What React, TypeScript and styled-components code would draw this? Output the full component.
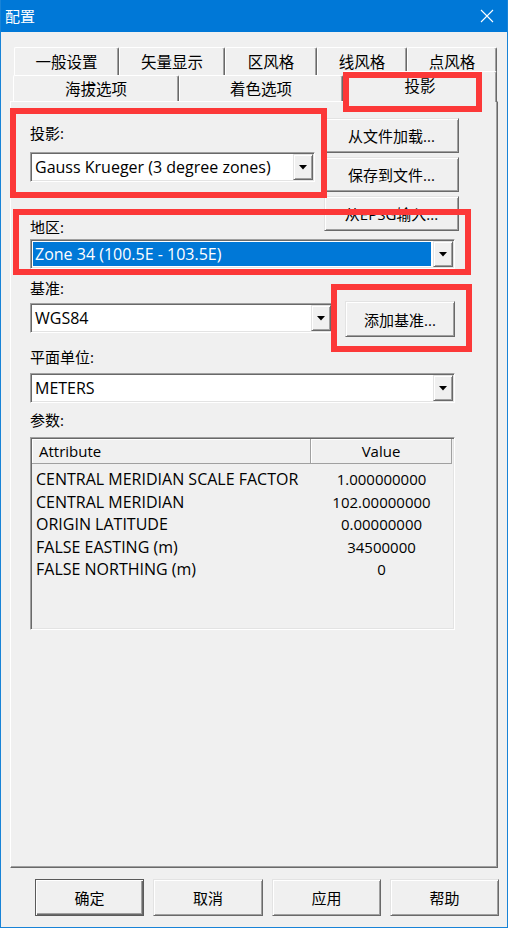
import React from 'react'
import styled, { createGlobalStyle, css } from 'styled-components'

const GlobalStyle = createGlobalStyle`
  * { box-sizing: border-box; }
  html, body { margin: 0; padding: 0; background: #f0f0f0; }
  body {
    font-family: "Open Sans", "Noto Sans CJK SC", sans-serif;
    font-size: 15px;
    color: #000;
  }
`

// classic 3d edges
const raised = css`
  border: 1px solid;
  border-color: #e3e3e3 #696969 #696969 #e3e3e3;
  box-shadow: inset 1px 1px #fff, inset -1px -1px #a0a0a0;
`
const sunken = css`
  border: 1px solid;
  border-color: #a0a0a0 #fff #fff #a0a0a0;
  box-shadow: inset 1px 1px #696969, inset -1px -1px #e3e3e3;
`

const Window = styled.div`
  position: relative;
  width: 508px;
  height: 928px;
  background: #f0f0f0;
  border: 1px solid #1883d7;
  border-top: none;
  display: flex;
  flex-direction: column;
  overflow: hidden;
`

const TitleBar = styled.div`
  height: 32px;
  flex: none;
  background: #0078d7;
  color: #fff;
  display: flex;
  align-items: center;
  justify-content: space-between;
  padding: 0 13px 0 4px;
`

const Title = styled.span`
  font-size: 15px;
  line-height: 20px;
`

const Body = styled.div`
  flex: 1;
  padding: 15px 9px 0;
`

const TabRow = styled.div<{ $height: number; $indent: number }>`
  display: flex;
  align-items: flex-end;
  height: ${p => p.$height}px;
  padding-left: ${p => p.$indent}px;
`

const Tab = styled.div<{ $width: number; $selected?: boolean }>`
  flex: none;
  width: ${p => p.$width}px;
  height: ${p => (p.$selected ? '31px' : '100%')};
  background: #f0f0f0;
  border-top: 1px solid #fff;
  border-left: 1px solid #fff;
  border-right: 1px solid #696969;
  box-shadow: inset -1px 0 #a0a0a0;
  border-radius: 2px 2px 0 0;
  display: flex;
  align-items: center;
  justify-content: center;
  font-size: 15.5px;
  line-height: 20px;
  padding-bottom: ${p => (p.$selected ? 3 : 0)}px;
  position: relative;
  z-index: ${p => (p.$selected ? 2 : 1)};
  margin-bottom: ${p => (p.$selected ? -1 : 0)}px;
`

const Panel = styled.div`
  height: 767px;
  border: 1px solid;
  border-color: #fff #696969 #696969 #fff;
  box-shadow: inset -1px -1px #a0a0a0;
  padding: 16px 0 0 19px;
`

const Row = styled.div`
  display: flex;
  align-items: flex-start;
`

const Column = styled.div<{ $width?: number; $gap?: number; $offset?: number }>`
  display: flex;
  flex-direction: column;
  gap: ${p => p.$gap ?? 0}px;
  width: ${p => (p.$width ? `${p.$width}px` : 'auto')};
  margin-left: ${p => p.$offset ?? 0}px;
`

const Label = styled.div<{ $top: number }>`
  height: 20px;
  line-height: 20px;
  margin-top: ${p => p.$top}px;
  font-size: 15px;
`

const Combo = styled.div<{ $width: number; $top?: number }>`
  ${sunken}
  width: ${p => p.$width}px;
  height: 30px;
  margin-top: ${p => p.$top ?? 0}px;
  background: #fff;
  padding: 1px;
  display: flex;
  flex: none;
`

const ComboText = styled.div<{ $selected?: boolean }>`
  flex: 1;
  display: flex;
  align-items: center;
  margin: 1px 2px 1px 1px;
  padding-left: 2px;
  font-size: 16px;
  white-space: nowrap;
  overflow: hidden;
  background: ${p => (p.$selected ? '#0078d7' : 'transparent')};
  color: ${p => (p.$selected ? '#fff' : '#000')};
`

const DropButton = styled.div`
  ${raised}
  width: 20px;
  flex: none;
  background: #f0f0f0;
  display: flex;
  align-items: center;
  justify-content: center;
`

const Button = styled.div<{ $width: number; $height: number; $top?: number; $default?: boolean }>`
  ${raised}
  width: ${p => p.$width}px;
  height: ${p => p.$height}px;
  margin-top: ${p => p.$top ?? 0}px;
  flex: none;
  background: #f0f0f0;
  display: flex;
  align-items: center;
  justify-content: center;
  font-size: 15px;
  white-space: nowrap;
  ${p =>
    p.$default &&
    css`
      border: 1px solid #5a5a5a;
      box-shadow: inset 1px 1px #fff, inset -1px -1px #696969, inset -2px -2px #a0a0a0;
    `}
`

const List = styled.div`
  ${sunken}
  width: 425px;
  height: 193px;
  margin-top: 7px;
  background: #f0f0f0;
  padding: 1px;
`

const ListHeader = styled.div`
  display: flex;
  height: 25px;
`

const HeaderCell = styled.div<{ $width: number; $center?: boolean }>`
  width: ${p => p.$width}px;
  flex: none;
  border-right: 1px solid #a0a0a0;
  border-bottom: 1px solid #a0a0a0;
  box-shadow: inset 1px 1px #fff;
  display: flex;
  align-items: center;
  justify-content: ${p => (p.$center ? 'center' : 'flex-start')};
  padding-left: ${p => (p.$center ? 0 : 7)}px;
  font-size: 15px;
`

const ListBody = styled.div`
  padding-top: 4px;
`

const ListRow = styled.div`
  display: flex;
  height: 22.5px;
  align-items: center;
  white-space: nowrap;
`

const Cell = styled.div<{ $width: number; $center?: boolean }>`
  width: ${p => p.$width}px;
  flex: none;
  text-align: ${p => (p.$center ? 'center' : 'left')};
  padding-left: ${p => (p.$center ? 0 : 4)}px;
  font-size: ${p => (p.$center ? 15 : 16)}px;
`

const Footer = styled.div`
  display: flex;
  gap: 9px;
  margin-top: 11px;
  padding-left: 25px;
`

const Annotation = styled.div<{ $x: number; $y: number; $w: number; $h: number }>`
  position: absolute;
  left: ${p => p.$x}px;
  top: ${p => p.$y}px;
  width: ${p => p.$w}px;
  height: ${p => p.$h}px;
  border: 6px solid #fc3838;
  pointer-events: none;
  z-index: 10;
`

const Arrow = () => (
  <svg width="8" height="5" viewBox="0 0 8 5">
    <polygon points="0,0 8,0 4,4.5" fill="#000" />
  </svg>
)

const CloseIcon = () => (
  <svg width="14" height="14" viewBox="0 0 14 14">
    <path d="M1 1 L13 13 M13 1 L1 13" stroke="#fff" strokeWidth="1.1" fill="none" />
  </svg>
)

const params = [
  ['CENTRAL MERIDIAN SCALE FACTOR', '1.000000000'],
  ['CENTRAL MERIDIAN', '102.00000000'],
  ['ORIGIN LATITUDE', '0.00000000'],
  ['FALSE EASTING (m)', '34500000'],
  ['FALSE NORTHING (m)', '0'],
]

const App: React.FC = () => {
  return (
    <>
      <GlobalStyle />
      <Window>
        <TitleBar>
          <Title>配置</Title>
          <CloseIcon />
        </TitleBar>
        <Body>
          <TabRow $height={28} $indent={4}>
            <Tab $width={105}>一般设置</Tab>
            <Tab $width={106}>矢量显示</Tab>
            <Tab $width={92}>区风格</Tab>
            <Tab $width={90}>线风格</Tab>
            <Tab $width={90}>点风格</Tab>
          </TabRow>
          <TabRow $height={26} $indent={3}>
            <Tab $width={166}>海拔选项</Tab>
            <Tab $width={164}>着色选项</Tab>
            <Tab $width={154} $selected>
              投影
            </Tab>
          </TabRow>
          <Panel>
            <Row>
              <Column $width={285}>
                <Label $top={5}>投影:</Label>
                <Combo $width={285} $top={9}>
                  <ComboText>Gauss Krueger (3 degree zones)</ComboText>
                  <DropButton>
                    <Arrow />
                  </DropButton>
                </Combo>
                <Label $top={35}>地区:</Label>
              </Column>
              <Column $offset={9} $gap={4}>
                <Button $width={135} $height={35}>从文件加载...</Button>
                <Button $width={135} $height={35}>保存到文件...</Button>
                <Button $width={135} $height={35}>从EPSG输入...</Button>
              </Column>
            </Row>
            <Combo $width={425} $top={2}>
              <ComboText $selected>Zone 34 (100.5E - 103.5E)</ComboText>
              <DropButton>
                <Arrow />
              </DropButton>
            </Combo>
            <Row>
              <Column $width={303}>
                <Label $top={9}>基准:</Label>
                <Combo $width={303} $top={5}>
                  <ComboText>WGS84</ComboText>
                  <DropButton>
                    <Arrow />
                  </DropButton>
                </Combo>
              </Column>
              <Column $offset={12}>
                <Button $width={110} $height={36} $top={32}>
                  添加基准...
                </Button>
              </Column>
            </Row>
            <Label $top={10}>平面单位:</Label>
            <Combo $width={425} $top={6}>
              <ComboText>METERS</ComboText>
              <DropButton>
                <Arrow />
              </DropButton>
            </Combo>
            <Label $top={7}>参数:</Label>
            <List>
              <ListHeader>
                <HeaderCell $width={279}>Attribute</HeaderCell>
                <HeaderCell $width={141} $center>
                  Value
                </HeaderCell>
              </ListHeader>
              <ListBody>
                {params.map(([name, value]) => (
                  <ListRow key={name}>
                    <Cell $width={279}>{name}</Cell>
                    <Cell $width={141} $center>
                      {value}
                    </Cell>
                  </ListRow>
                ))}
              </ListBody>
            </List>
          </Panel>
          <Footer>
            <Button $width={109} $height={37} $default>
              确定
            </Button>
            <Button $width={110} $height={37}>取消</Button>
            <Button $width={109} $height={37}>应用</Button>
            <Button $width={109} $height={37}>帮助</Button>
          </Footer>
        </Body>
        <Annotation $x={342} $y={72} $w={139} $h={40} />
        <Annotation $x={9} $y={108} $w={317} $h={90} />
        <Annotation $x={12} $y={209} $w={458} $h={66} />
        <Annotation $x={330} $y={284} $w={141} $h={68} />
      </Window>
    </>
  )
}

export default App
